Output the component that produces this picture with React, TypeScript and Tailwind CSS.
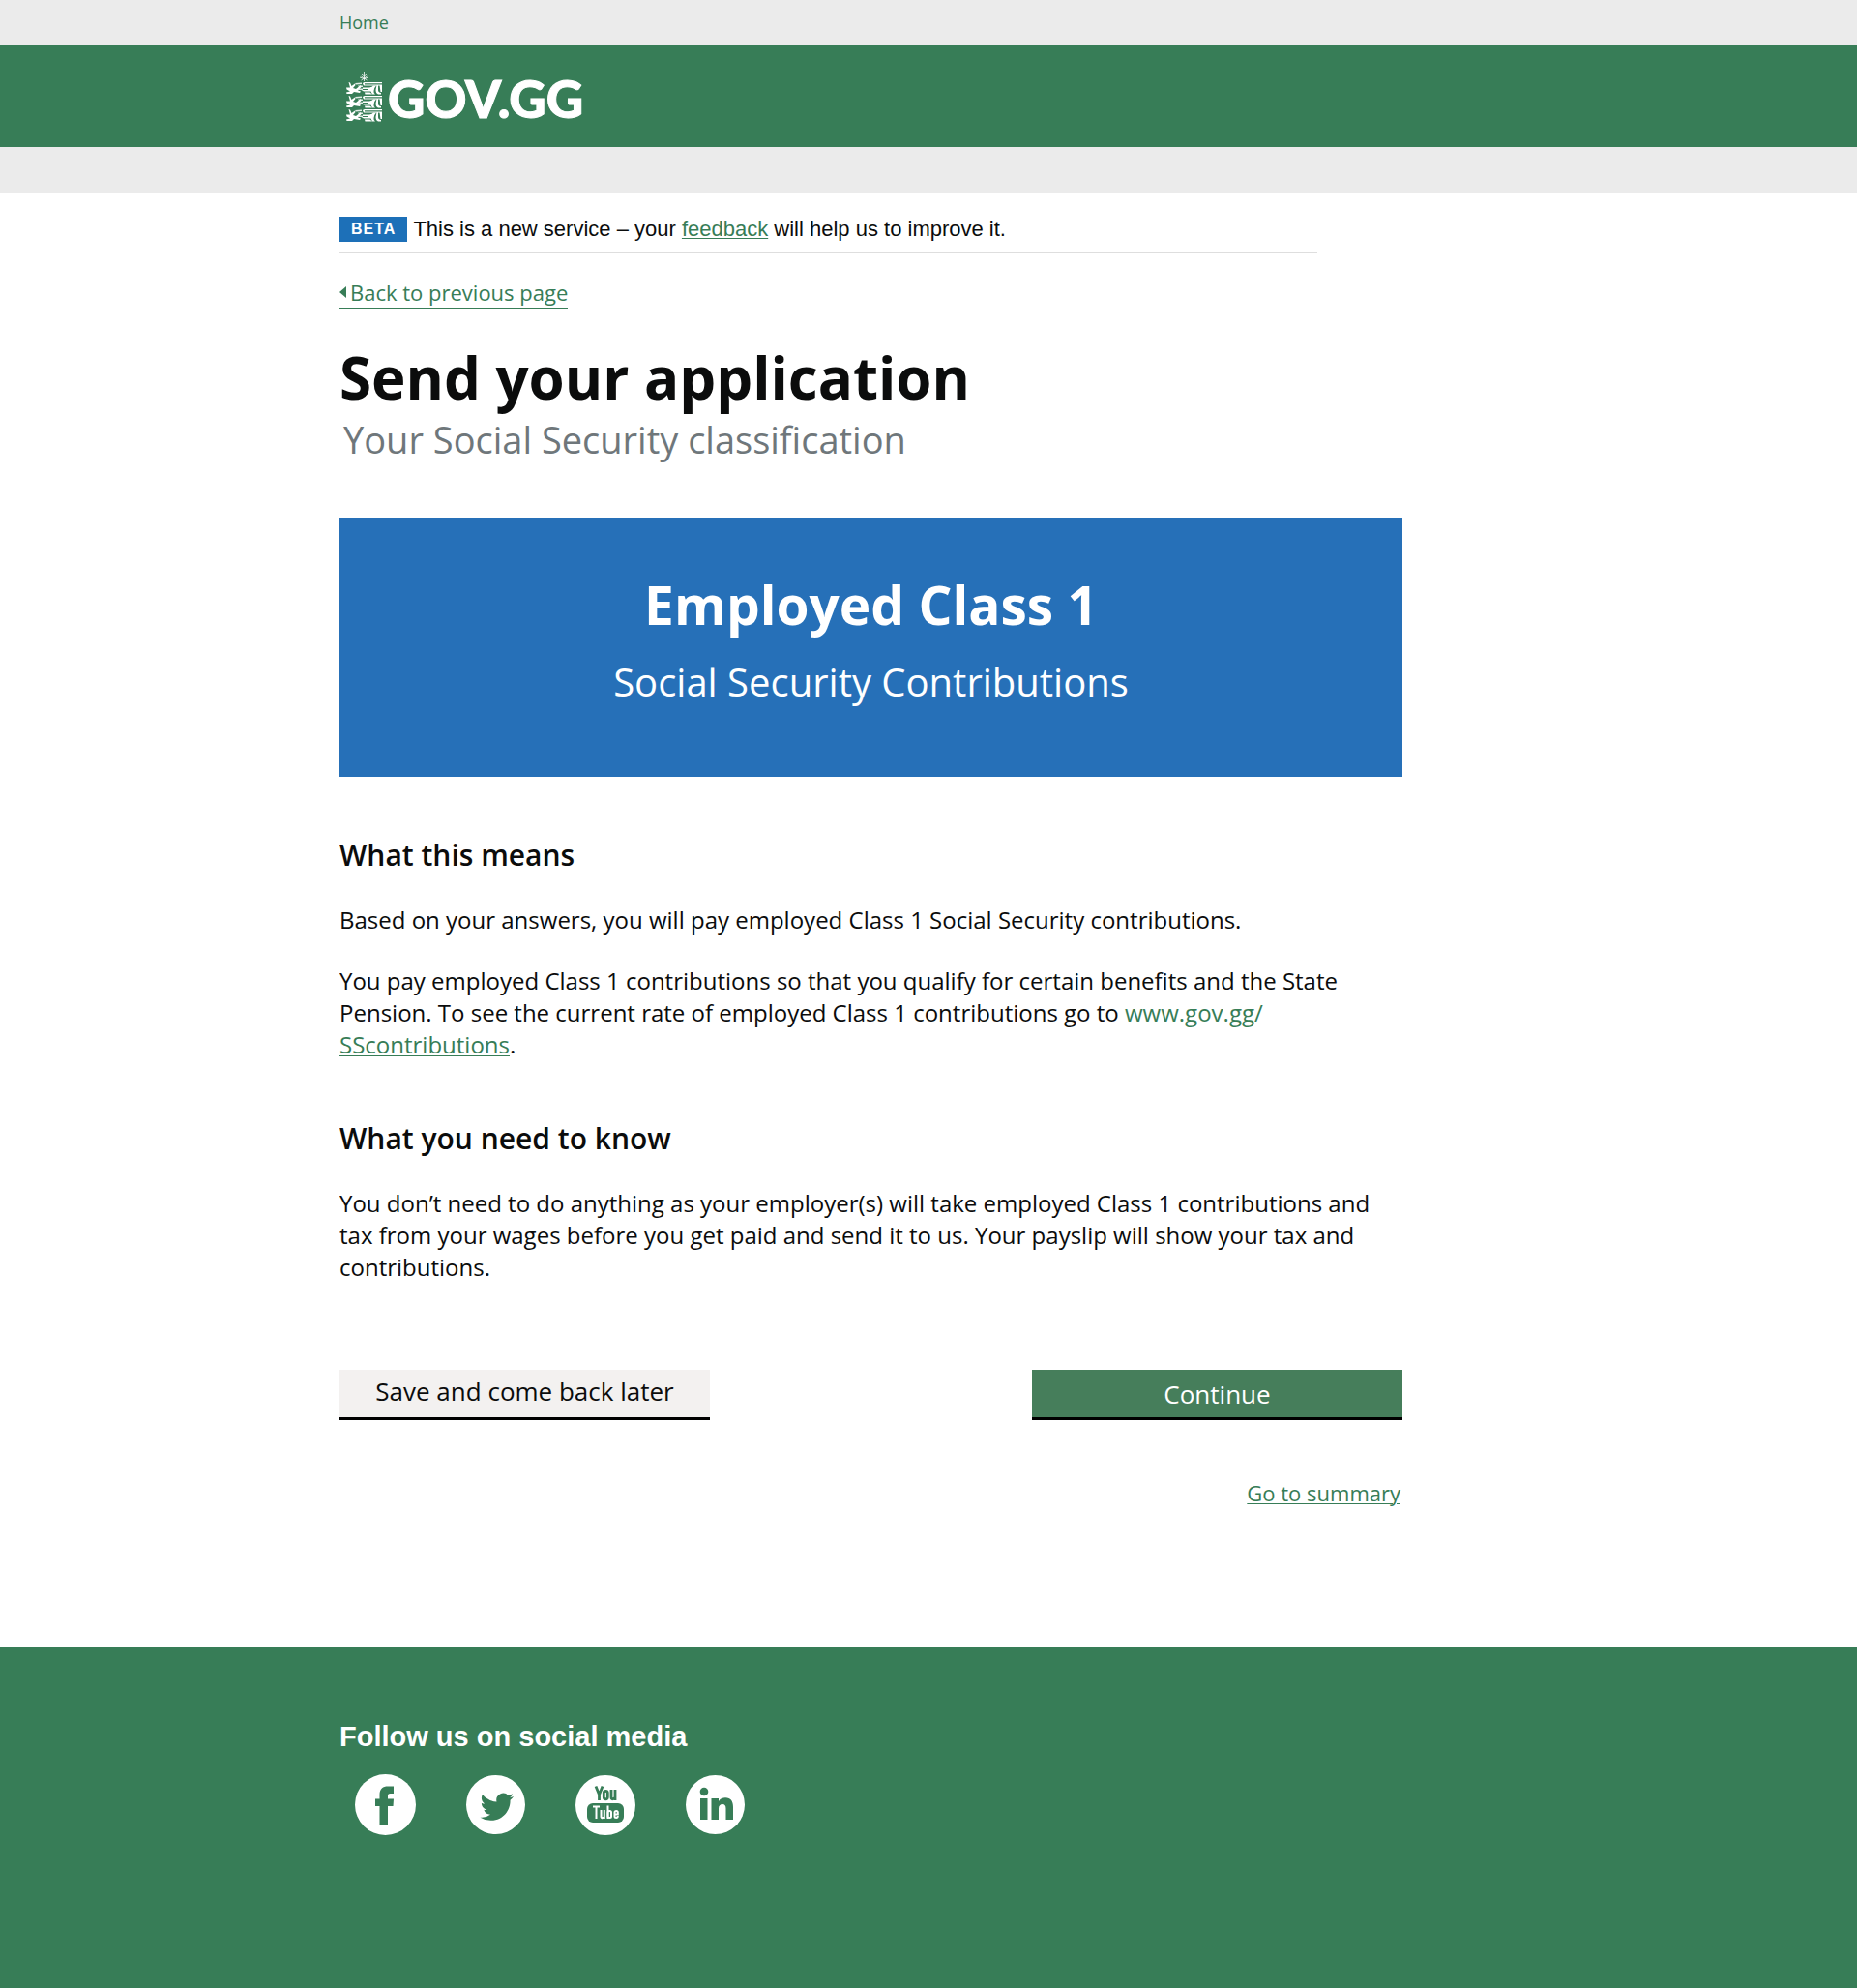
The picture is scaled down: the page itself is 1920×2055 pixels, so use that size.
import React from "react";

const page = "mx-auto w-full max-w-[1218px]";
const link = "text-[#377d57] underline decoration-1 underline-offset-2";

function Lion() {
  return (
    <g fill="#fff">
      {/* forelegs and mane */}
      <path d="M2.500 0 L4 0.500 L5.500 4 L9 1.500 L9.500 3 L7 6 L10 7 L15 3 L15.500 5 L12 8.500 L15 9.500 L14 11 L8 10 L6 12 L0.500 12 L0 10.500 L4 9.500 L0.500 7.500 L0 5.500 L4 5.500 Z" />
      <path d="M9 1 L16 0.500 L16 2 L10 2.500 Z M12 3.500 H17 V5 H13 Z M13 6.500 H17 V8 H13 Z" opacity=".85" />
      {/* back and tail */}
      <path d="M17 1.500 Q17 0 19 0 H37 V1.200 H19 V2.500 H37 V3.600 H18 Z" />
      {/* body */}
      <path d="M17 5.500 H24 Q27 5 28 3.500 H31 Q28.500 6 28.500 9 Q28 11.500 30 12.500 H27 L25.500 9.500 L18 9.500 L15.500 8 L22 8 L23 7 H17 Z" />
      <path d="M19 10.500 H24.500 L27 12.500 H19.500 Z" />
      {/* hind legs */}
      <path d="M31.500 3 H33 V8 Q33 10.500 36 11 V12.500 H33 Q30.500 11.500 30.500 8 Z M34.500 3 H37 V10 H35.500 Z" />
    </g>
  );
}

function Crest() {
  return (
    <svg viewBox="0 0 38 52" className="h-[52px] w-[38px]" aria-hidden="true">
      <path d="M18.500 0 V10 M16 3 L18.500 5 L21 3 M14 6 L18.500 7.500 L23 6 M15.500 5 L21.500 9 M21.500 5 L15.500 9" fill="none" stroke="#fff" strokeWidth="1" opacity=".75" />
      <g transform="translate(0 11)"><Lion /></g>
      <g transform="translate(0 25)"><Lion /></g>
      <g transform="translate(0 39)"><Lion /></g>
    </svg>
  );
}

function Facebook() {
  return (
    <svg viewBox="0 0 63 63" className="size-[63px]" aria-hidden="true">
      <circle cx="31.500" cy="31.500" r="31.500" fill="#fff" />
      <path fill="#377d57" d="M25.500 53 V33 H21 V25.500 H25.500 V21 C25.500 15 29 12.500 34 12.500 H40 V20 H36.500 C34.500 20 34 21 34 22.500 V25.500 H40 L39.500 33 H34 V53 Z" />
    </svg>
  );
}

function Twitter() {
  return (
    <svg viewBox="0 0 61 61" className="size-[61px]" aria-hidden="true">
      <circle cx="30.500" cy="30.500" r="30.500" fill="#fff" />
      <g transform="translate(14.500 15.500) scale(1.44)">
        <path fill="#377d57" d="M23.953 4.570a10 10 0 0 1-2.825.775 4.958 4.958 0 0 0 2.163-2.723c-.951.555-2.005.959-3.127 1.184a4.920 4.920 0 0 0-8.384 4.482C7.690 8.095 4.067 6.130 1.640 3.162a4.822 4.822 0 0 0-.666 2.475c0 1.710.870 3.213 2.188 4.096a4.904 4.904 0 0 1-2.228-.616v.060a4.923 4.923 0 0 0 3.946 4.827 4.996 4.996 0 0 1-2.212.085 4.936 4.936 0 0 0 4.604 3.417 9.867 9.867 0 0 1-6.102 2.105c-.390 0-.779-.023-1.170-.067a13.995 13.995 0 0 0 7.557 2.209c9.053 0 13.998-7.496 13.998-13.985 0-.210 0-.420-.015-.630A9.935 9.935 0 0 0 24 4.590z" />
      </g>
    </svg>
  );
}

function YouTube() {
  return (
    <svg viewBox="0 0 62 62" className="size-[62px]" fill="none" strokeWidth="2.800" aria-hidden="true">
      <circle cx="31" cy="31" r="31" fill="#fff" />
      <g stroke="#377d57">
        <path d="M21 11.500 L24.500 20 L28 11.500 M24.500 19 V26" />
        <rect x="29.300" y="16.300" width="4" height="8.500" rx="2" />
        <path d="M37 15 V23 Q37 25 38.500 24.700 Q40 24.500 41 23 M41 15 V26" />
      </g>
      <rect x="12" y="29" width="38" height="20" rx="6" fill="#377d57" />
      <g stroke="#fff" strokeWidth="2">
        <path d="M18 32.500 H25 M21.500 32.500 V45 M26.500 36 V43 Q26.500 44.500 28 44 L29.800 43 M29.800 36 V45 M33.500 31.500 V45" />
        <rect x="33.500" y="37" width="3.500" height="7" rx="1.500" />
        <path d="M40.500 40.500 H43.800 V38.500 Q43.800 37 42.200 37 Q40.500 37 40.500 38.500 V42.500 Q40.500 44 42.200 44 Q43.800 44 43.800 42" />
      </g>
    </svg>
  );
}

function LinkedIn() {
  return (
    <svg viewBox="0 0 61 61" className="size-[61px]" aria-hidden="true">
      <circle cx="30.500" cy="30.500" r="30.500" fill="#fff" />
      <g fill="#377d57">
        <circle cx="19" cy="17" r="4.300" />
        <path d="M15 24 H22.500 V46 H15 Z M26.500 24 H34 V27 C36 24 38.500 23.300 41 23.300 C46.500 23.300 49 27 49 33 V46 H41.500 V34.500 C41.500 31.500 40.500 30 38 30 C35.500 30 34 31.500 34 34.500 V46 H26.500 Z" />
      </g>
    </svg>
  );
}

const social = [
  { name: "Facebook", Icon: Facebook },
  { name: "Twitter", Icon: Twitter },
  { name: "YouTube", Icon: YouTube },
  { name: "LinkedIn", Icon: LinkedIn },
];

export default function App() {
  return (
    <div className="flex min-h-screen flex-col bg-white font-['Open_Sans',sans-serif] text-[#0b0c0c]">
      <nav className="bg-[#ebebeb]">
        <div className={page}>
          <a href="#" className="inline-block align-top text-lg leading-[47px] text-[#377d57]">Home</a>
        </div>
      </nav>
      <header className="bg-[#377d57]">
        <div className={page}>
          <a href="#" aria-label="GOV.GG home" className="flex h-[105px] w-fit items-center gap-[5px] pl-[7px] text-white">
            <Crest />
            <span className="pt-1 font-['Lato',sans-serif] text-[53px] leading-none font-black [-webkit-text-stroke:1px_white]">GOV.GG</span>
          </a>
        </div>
      </header>
      <div className="h-[47px] bg-[#ebebeb]" />

      <main className={page}>
        <div className="mt-[25px] flex max-w-[1011px] items-center border-b-2 border-[#dedede] pb-2.5 font-['Liberation_Sans',sans-serif]">
          <strong className="bg-[#1d70b8] px-3 text-base leading-[26px] tracking-[1px] text-white">BETA</strong>
          <p className="ml-1.5 text-[22px] leading-[26px]">
            This is a new service – your <a href="#" className={link}>feedback</a> will help us to improve it.
          </p>
        </div>

        <a href="#" className="mt-6 flex w-fit items-center gap-1 border-b border-[#377d57] text-[22px] leading-8 text-[#377d57]">
          <svg viewBox="0 0 7 12" className="h-3 w-[7px]" aria-hidden="true"><path d="M7 0 V12 L0 6 Z" fill="#377d57" /></svg>
          Back to previous page
        </a>

        <div className="max-w-[1099px]">
          <h1 className="mt-[33px] text-[60px] leading-[76px] font-bold">Send your application</h1>
          <p className="pl-1 text-[38px] leading-[52px] text-[#6f777b]">Your Social Security classification</p>

          <section className="mt-[55px] bg-[#2670b8] pt-[54px] pb-[70px] text-center text-white">
            <h2 className="text-[55px] leading-[72px] font-bold">Employed Class 1</h2>
            <p className="mt-4 text-[40px] leading-[56px]">Social Security Contributions</p>
          </section>

          <section className="mt-[61px] text-2xl leading-[33px]">
            <h3 className="text-[30px] leading-10 font-semibold">What this means</h3>
            <p className="mt-[30px]">Based on your answers, you will pay employed Class 1 Social Security contributions.</p>
            <p className="mt-[30px]">
              You pay employed Class 1 contributions so that you qualify for certain benefits and the State Pension. To see the current rate of employed Class 1 contributions go to{" "}
              <a href="#" className={link}>www.gov.gg/<wbr />SScontributions</a>.
            </p>
          </section>

          <section className="mt-[61px] text-2xl leading-[33px]">
            <h3 className="text-[30px] leading-10 font-semibold">What you need to know</h3>
            <p className="mt-[30px]">
              You don’t need to do anything as your employer(s) will take employed Class 1 contributions and tax from your wages before you get paid and send it to us. Your payslip will show your tax and contributions.
            </p>
          </section>

          <div className="mt-[90px] flex justify-between text-[26px]">
            <button type="button" className="h-[52px] w-[383px] border-b-3 border-black bg-[#f3f1f0] pb-1.5 leading-9">Save and come back later</button>
            <button type="button" className="h-[52px] w-[383px] border-b-3 border-black bg-[#467e5b] leading-9 text-white">Continue</button>
          </div>
          <div className="mt-[59px] pr-0.5 text-right text-[22px] leading-8">
            <a href="#" className={link}>Go to summary</a>
          </div>
        </div>
      </main>

      <footer className="mt-36 grow bg-[#377d57] pt-[76px] pb-[120px]">
        <div className={page}>
          <h2 className="font-['Liberation_Sans',sans-serif] text-[29px] leading-8 font-bold text-white">Follow us on social media</h2>
          <ul className="mt-[23px] flex items-center gap-[52px] pl-4">
            {social.map(({ name, Icon }) => (
              <li key={name}><a href="#" aria-label={name} className="block"><Icon /></a></li>
            ))}
          </ul>
        </div>
      </footer>
    </div>
  );
}
